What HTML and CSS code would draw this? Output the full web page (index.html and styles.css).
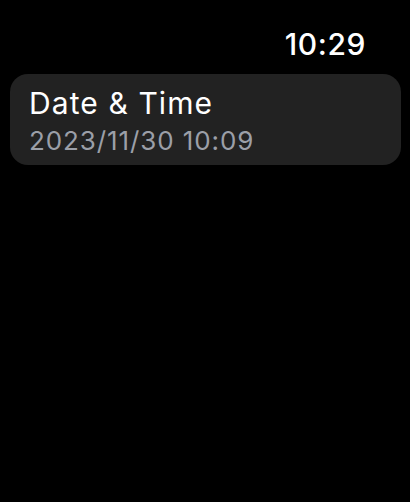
FILE: index.html
```html
<!DOCTYPE html>
<html>
<head>
<meta charset="utf-8">
<link rel="stylesheet" href="styles.css">
</head>
<body>
<div class="screen">
  <div class="status">
    <span class="clock">10:29</span>
  </div>
  <div class="list">
    <div class="cell">
      <div class="cell-title">Date &amp; Time</div>
      <div class="cell-sub">2023/11/30 10:09</div>
    </div>
  </div>
</div>
</body>
</html>
```
FILE: styles.css
```css
html, body {
  margin: 0;
  padding: 0;
  background: #000;
}
.screen {
  width: 410px;
  height: 502px;
  background: #000;
  font-family: Inter, "Noto Sans", sans-serif;
  color: #fff;
  display: flex;
  flex-direction: column;
}
.status {
  display: flex;
  justify-content: flex-end;
  padding: 26px 44px 0 0;
  height: 36px;
}
.clock {
  font-size: 30px;
  font-weight: 500;
  line-height: 36px;
  letter-spacing: 0.6px;
}
.list {
  padding: 12px 9px 0 10px;
}
.cell {
  background: #222222;
  border-radius: 18px;
  padding: 11px 19px 6px;
  display: flex;
  flex-direction: column;
}
.cell-title {
  font-size: 30px;
  line-height: 36px;
  font-weight: 400;
  letter-spacing: 1.1px;
}
.cell-sub {
  margin-top: 2px;
  font-size: 26px;
  line-height: 36px;
  color: #9b9fa8;
  letter-spacing: 0.9px;
}
```
